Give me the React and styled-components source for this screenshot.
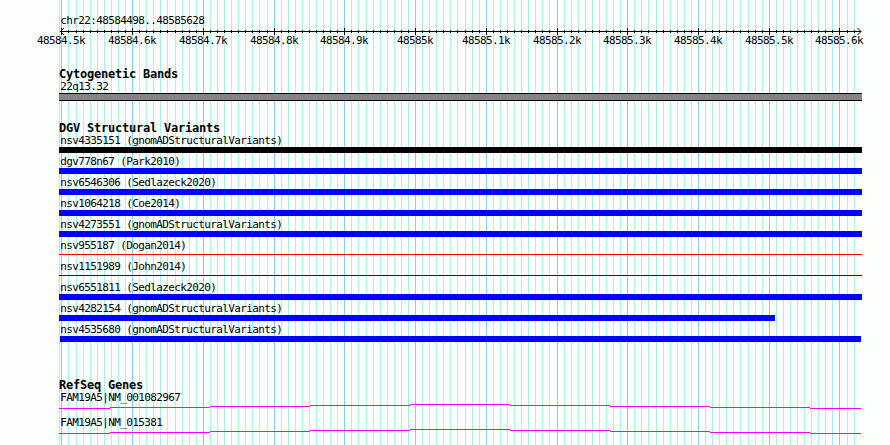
import styled, { createGlobalStyle } from 'styled-components'

const LEFT = 59
const TICK_START = 61.855
const TICK_STEP = 7.074

const ticks = Array.from({ length: 113 }, (_, i) => ({
    x: Math.floor(TICK_START + i * TICK_STEP),
    major: i % 10 === 0,
    label: `${(485845 + i / 10) / 10}k`,
}))

const variants = [
    { name: 'nsv4335151 (gnomADStructuralVariants)', color: '#000000' },
    { name: 'dgv778n67 (Park2010)' },
    { name: 'nsv6546306 (Sedlazeck2020)' },
    { name: 'nsv1064218 (Coe2014)' },
    { name: 'nsv4273551 (gnomADStructuralVariants)' },
    { name: 'nsv955187 (Dogan2014)', color: '#ff0000', thin: true },
    { name: 'nsv1151989 (John2014)', thin: true },
    { name: 'nsv6551811 (Sedlazeck2020)' },
    { name: 'nsv4282154 (gnomADStructuralVariants)', width: 716 },
    { name: 'nsv4535680 (gnomADStructuralVariants)', start: 1, width: 801 },
]

const genes = ['FAM19A5|NM_001082967', 'FAM19A5|NM_015381']

// x, width and y of each step of the intron line
const steps = [
    [0, 51, 4], [51, 100, 3], [151, 100, 2], [251, 100, 1], [351, 100, 0],
    [451, 100, 1], [551, 100, 2], [651, 100, 3], [751, 51, 4],
]

const GridLines = () => (
    <Grid width="890" height="445">
        <rect x={LEFT} y="0" width="1" height="445" fill="#afeeee" />
        {ticks.map((t) => (
            <rect key={t.x} x={t.x} y="0" width="1" height="445" fill={t.major ? '#87ceeb' : '#afeeee'} />
        ))}
    </Grid>
)

const Scale = () => (
    <Ruler width="890" height="20">
        <rect x="60" y="4" width="801" height="1" />
        <path d="M64 1L60.5 4.5L64 8M857.5 1L861 4.5L857.5 8" fill="none" stroke="#000" />
        {ticks.map((t) => (
            <rect key={t.x} x={t.x} y={t.major ? 1 : 3} width="1" height={t.major ? 7 : 3} />
        ))}
        {ticks.filter((t) => t.major).map((t) => (
            <text key={t.x} x={t.x - t.label.length * 3} y="17">{t.label}</text>
        ))}
    </Ruler>
)

const App = () => {
    return (
        <Page>
            <Global />
            <GridLines />
            <Tracks>
                <Label>chr22:48584498..48585628</Label>
                <Scale />

                <Section $gap={21}>
                    <Title>Cytogenetic Bands</Title>
                    <Label>22q13.32</Label>
                    <Band />
                </Section>

                <Section $gap={21}>
                    <Title>DGV Structural Variants</Title>
                    {variants.map((v) => (
                        <Variant key={v.name}>
                            <Label>{v.name}</Label>
                            <Bar $color={v.color} $thin={v.thin} $start={v.start} $width={v.width} />
                        </Variant>
                    ))}
                </Section>

                <Section $gap={34}>
                    <Title>RefSeq Genes</Title>
                    {genes.map((g) => (
                        <Gene key={g}>
                            <Label>{g}</Label>
                            <Intron width="803" height="5">
                                {steps.map(([x, w, y]) => (
                                    <rect key={x} x={x} y={y} width={w} height="1" />
                                ))}
                            </Intron>
                        </Gene>
                    ))}
                </Section>
            </Tracks>
        </Page>
    )
}

export default App

const Global = createGlobalStyle`
body {
    margin: 0;
    background: #fdfffc;
    overflow: hidden;
}
`

const Page = styled.main`
position: relative;
width: 890px;
height: 445px;
overflow: hidden;
color: #000;
font-family: "DejaVu Sans Mono", "Liberation Mono", monospace;
font-size: 11px;
letter-spacing: -0.622px;
`

const Grid = styled.svg`
position: absolute;
top: 0;
left: 0;
shape-rendering: crispEdges;
`

const Tracks = styled.div`
position: relative;
display: flex;
flex-direction: column;
box-sizing: border-box;
padding: 15px 28px 0 59px;
`

const Label = styled.div`
height: 12px;
padding-left: 1.3px;
line-height: 12px;
white-space: pre;
`

const Ruler = styled.svg`
display: block;
margin-left: -59px;
overflow: visible;

rect {
    shape-rendering: crispEdges;
}
`

const Section = styled.section`
display: flex;
flex-direction: column;
margin-top: ${(p) => p.$gap}px;
`

const Title = styled.h2`
height: 13px;
margin: 0;
font-size: 12px;
font-weight: bold;
letter-spacing: -0.224px;
line-height: 13px;
`

const Band = styled.div`
box-sizing: border-box;
width: 803px;
height: 8px;
background: #868286;
border: solid #000;
border-width: 1px 0;
`

const Variant = styled.div`
height: 21px;
`

const Bar = styled.div`
width: ${(p) => p.$width || 803}px;
height: ${(p) => (p.$thin ? 1 : 6)}px;
margin-top: ${(p) => (p.$thin ? 2 : 0)}px;
margin-left: ${(p) => p.$start || 0}px;
background: ${(p) => p.$color || '#0000ff'};
`

const Gene = styled.div`
height: 25px;
`

const Intron = styled.svg`
display: block;
fill: #ff00ff;
shape-rendering: crispEdges;
`
